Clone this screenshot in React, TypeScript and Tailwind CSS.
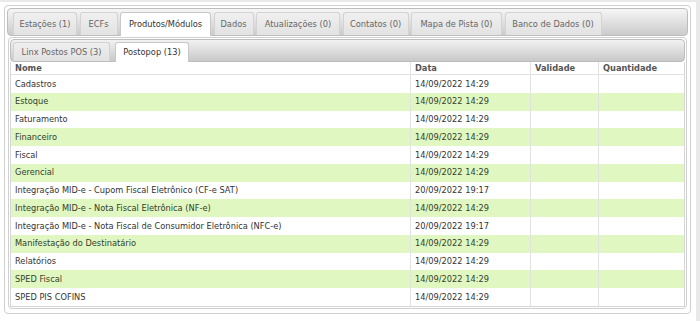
import React from 'react';

const outerTabs = [
  { label: 'Estações (1)', w: 'w-[64px]' },
  { label: 'ECFs', w: 'w-[38px]' },
  { label: 'Produtos/Módulos', w: 'w-[91px]', active: true },
  { label: 'Dados', w: 'w-[40px]' },
  { label: 'Atualizações (0)', w: 'w-[84px]' },
  { label: 'Contatos (0)', w: 'w-[66px]' },
  { label: 'Mapa de Pista (0)', w: 'w-[91px]' },
  { label: 'Banco de Dados (0)', w: 'w-[97px]' },
];

const rows = [
  { nome: 'Cadastros', data: '14/09/2022 14:29' },
  { nome: 'Estoque', data: '14/09/2022 14:29' },
  { nome: 'Faturamento', data: '14/09/2022 14:29' },
  { nome: 'Financeiro', data: '14/09/2022 14:29' },
  { nome: 'Fiscal', data: '14/09/2022 14:29' },
  { nome: 'Gerencial', data: '14/09/2022 14:29' },
  { nome: 'Integração MID-e - Cupom Fiscal Eletrônico (CF-e SAT)', data: '20/09/2022 19:17' },
  { nome: 'Integração MID-e - Nota Fiscal Eletrônica (NF-e)', data: '14/09/2022 14:29' },
  { nome: 'Integração MID-e - Nota Fiscal de Consumidor Eletrônica (NFC-e)', data: '20/09/2022 19:17' },
  { nome: 'Manifestação do Destinatário', data: '14/09/2022 14:29' },
  { nome: 'Relatórios', data: '14/09/2022 14:29' },
  { nome: 'SPED Fiscal', data: '14/09/2022 14:29' },
  { nome: 'SPED PIS COFINS', data: '14/09/2022 14:29' },
];

const cols = 'grid grid-cols-[399px_120px_68px_1fr]';

export default function App() {
  return (
    <div className="w-[700px] h-[321px] bg-white border-t-[2px] border-r-[4px] border-[#e9e9e9] pt-[3px] pl-[4px] font-['DejaVu_Sans',Verdana,sans-serif] text-[8.25px] text-[#333]">
      <div className="w-[687px] h-[309px] border border-[#cfcfcf] rounded-[4px] p-[2px] bg-white">
        {/* barra de abas principal */}
        <div className="h-[28px] border border-[#bdbdbd] rounded-[4px] bg-gradient-to-b from-[#f6f6f6] to-[#cbcbcb] flex items-end gap-[2.5px] pl-[5px]">
          {outerTabs.map((t) => (
            <div
              key={t.label}
              className={
                t.active
                  ? `${t.w} h-[24px] -mb-px border border-b-0 border-[#c8c8c8] rounded-t-[3px] bg-white text-[#333] flex items-center justify-center`
                  : `${t.w} h-[23px] border border-b-0 border-[#d3d3d3] rounded-t-[3px] bg-gradient-to-b from-[#f0f0f0] to-[#e2e2e2] text-[#666] flex items-center justify-center`
              }
            >
              {t.label}
            </div>
          ))}
        </div>

        {/* painel */}
        <div className="px-[1px] pt-[1px]">
          <div className="border border-[#d0d0d0] rounded-[4px] p-[1px]">
            <div className="h-[23px] border border-[#bdbdbd] rounded-[4px] bg-gradient-to-b from-[#f2f2f2] to-[#c9c9c9] flex items-end gap-[5px] pl-[2px]">
              <div className="w-[97px] h-[19px] border border-b-0 border-[#d3d3d3] rounded-t-[3px] bg-gradient-to-b from-[#efefef] to-[#e2e2e2] text-[#666] flex items-center justify-center">
                Linx Postos POS (3)
              </div>
              <div className="w-[74px] h-[20px] -mb-px border border-b-0 border-[#c8c8c8] rounded-t-[3px] bg-white flex items-center justify-center">
                Postopop (13)
              </div>
            </div>

            <div className="border border-t-0 border-[#d6d6d6]">
              <div className={`${cols} h-[13px] border-b border-[#e2e2e2] font-bold text-[#555]`}>
                <div className="pl-[4px] flex items-center">Nome</div>
                <div className="pl-[4px] flex items-center border-l border-[#e2e2e2]">Data</div>
                <div className="pl-[4px] flex items-center border-l border-[#e2e2e2]">Validade</div>
                <div className="pl-[4px] flex items-center border-l border-[#e2e2e2]">Quantidade</div>
              </div>
              {rows.map((r, i) => (
                <div
                  key={r.nome}
                  className={`${cols} h-[17.75px] ${i % 2 === 1 ? 'bg-[#e0f7c2] text-[#34402a]' : 'bg-white'}`}
                >
                  <div className="pl-[4px] flex items-center whitespace-nowrap">{r.nome}</div>
                  <div className="pl-[4px] flex items-center border-l border-[#e2e2e2]">{r.data}</div>
                  <div className="border-l border-[#e2e2e2]"></div>
                  <div className="border-l border-[#e2e2e2]"></div>
                </div>
              ))}
            </div>
          </div>
        </div>
      </div>
    </div>
  );
}
